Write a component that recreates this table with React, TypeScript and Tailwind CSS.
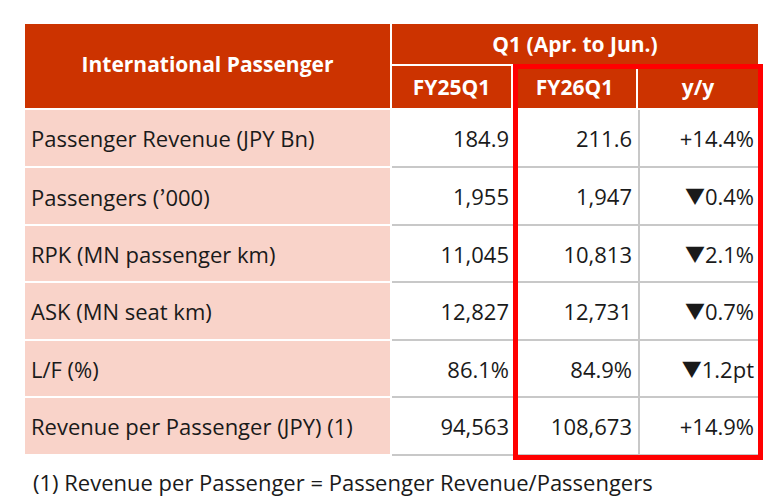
const Down = ({ v }: { v: string }) => (
  <>
    <span className="text-[20px] font-['Noto_Sans_CJK_JP'] align-[1px]">▼</span>
    {v}
  </>
);

const rows: { label: React.ReactNode; fy25: string; fy26: string; yy: React.ReactNode }[] = [
  { label: 'Passenger Revenue (JPY Bn)', fy25: '184.9', fy26: '211.6', yy: '+14.4%' },
  {
    label: (
      <>
        Passengers (<span className="font-['Noto_Sans_CJK_JP']">’</span>000)
      </>
    ),
    fy25: '1,955',
    fy26: '1,947',
    yy: <Down v="0.4%" />,
  },
  { label: 'RPK (MN passenger km)', fy25: '11,045', fy26: '10,813', yy: <Down v="2.1%" /> },
  { label: 'ASK (MN seat km)', fy25: '12,827', fy26: '12,731', yy: <Down v="0.7%" /> },
  { label: 'L/F (%)', fy25: '86.1%', fy26: '84.9%', yy: <Down v="1.2pt" /> },
  { label: 'Revenue per Passenger (JPY) (1)', fy25: '94,563', fy26: '108,673', yy: '+14.9%' },
];

const rowHeights = ['h-[58px]', 'h-[58px]', 'h-[57px]', 'h-[58px]', 'h-[57px]', 'h-[58px]'];

export default function App() {
  return (
    <div className="w-[784px] h-[501px] bg-white pl-[25px] pt-[24px] font-['Open_Sans','Noto_Sans_CJK_JP',sans-serif] text-[#1a1a1a]">
      <div className="relative w-[733px]">
        <table className="w-[733px] table-fixed border-separate border-spacing-0">
          <colgroup>
            <col className="w-[367px]" />
            <col className="w-[121px]" />
            <col className="w-[125px]" />
            <col className="w-[120px]" />
          </colgroup>
          <thead className="text-white font-bold text-[21px] leading-none">
            <tr className="h-[42px]">
              <th
                rowSpan={2}
                className="bg-[#cc3300] border-b-2 border-r-2 border-white align-middle text-center pb-[3px]"
              >
                International Passenger
              </th>
              <th colSpan={3} className="bg-[#cc3300] border-b-2 border-white text-center align-middle">
                Q1 (Apr. to Jun.)
              </th>
            </tr>
            <tr className="h-[44px]">
              <th className="bg-[#cc3300] border-b-2 border-r-2 border-white text-center">FY25Q1</th>
              <th className="bg-[#cc3300] border-b-2 border-r-2 border-white text-center">FY26Q1</th>
              <th className="bg-[#cc3300] border-b-2 border-white text-center">y/y</th>
            </tr>
          </thead>
          <tbody className="text-[22px] leading-none">
            {rows.map((r, i) => (
              <tr key={i} className={rowHeights[i]}>
                <td className="bg-[#f9d3c9] border-b-2 border-r-2 border-white pl-[6px] whitespace-nowrap">
                  {r.label}
                </td>
                <td className="border-b-2 border-[#c8c8c8] text-right pr-[4px]">{r.fy25}</td>
                <td className="border-b-2 border-l-2 border-[#c8c8c8] text-right pr-[6px]">{r.fy26}</td>
                <td className="border-b-2 border-l-2 border-[#c8c8c8] text-right pr-[4px] whitespace-nowrap">
                  {r.yy}
                </td>
              </tr>
            ))}
          </tbody>
        </table>
        {/* highlight frame around FY26Q1 and y/y */}
        <div className="pointer-events-none absolute left-[488px] top-[40px] w-[250px] h-[396px] border-[5px] border-[#ff0000]" />
      </div>
      <p className="mt-[15px] pl-[8px] text-[22px] leading-none">(1) Revenue per Passenger = Passenger Revenue/Passengers</p>
    </div>
  );
}
